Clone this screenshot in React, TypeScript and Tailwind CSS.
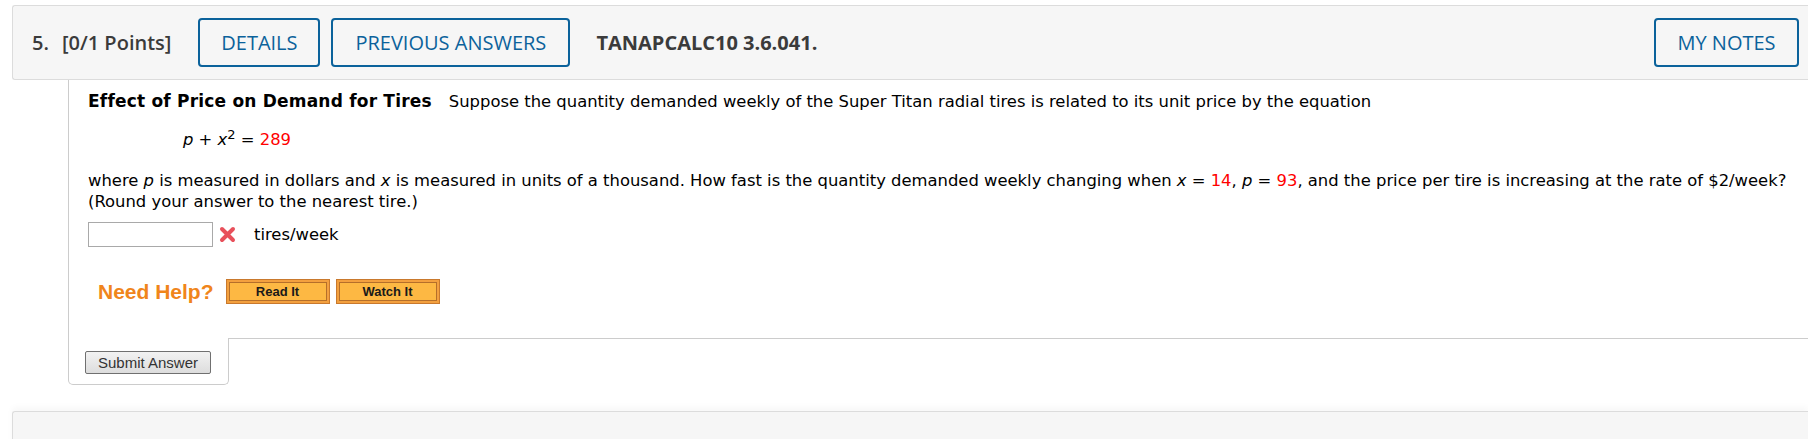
export default function App() {
  const red = "text-[#ff0000]";

  return (
    <div className="relative h-[439px] w-full overflow-hidden bg-white font-['DejaVu_Sans',sans-serif] text-black">
      {/* question header */}
      <div className="ml-[12px] mt-[5px] flex h-[75px] items-center rounded-l-[3px] border border-r-0 border-[#dcdcdc] bg-[#f6f6f6] pl-[19px] pr-[9px] font-['Open_Sans',sans-serif]">
        <span className="text-[20px] font-semibold text-[#3b3b3b]">5.</span>
        <span className="ml-[13px] text-[20px] font-semibold text-[#3b3b3b]">[0/1 Points]</span>
        <button className="ml-[27px] h-[49px] w-[122px] rounded-[4px] border-2 border-[#0b629b] text-[20px] text-[#0b629b]">
          DETAILS
        </button>
        <button className="ml-[11px] h-[49px] w-[239px] rounded-[4px] border-2 border-[#0b629b] text-[20px] text-[#0b629b]">
          PREVIOUS ANSWERS
        </button>
        <span className="ml-[26px] text-[20px] font-bold text-[#3b3b3b]">TANAPCALC10 3.6.041.</span>
        <div className="flex-1" />
        <button className="h-[49px] w-[145px] rounded-[4px] border-2 border-[#0b629b] text-[20px] text-[#0b629b]">
          MY NOTES
        </button>
      </div>

      {/* question body */}
      <div className="ml-[68px] flex flex-col">
        <div className="border-l border-[#cccccc] pb-[34px] pl-[19px] pt-[11px] text-[16.4px] leading-[21px]">
          <p>
            <span className="text-[17px] font-bold tracking-[0.2px]">Effect of Price on Demand for Tires</span>
            <span className="ml-[17px]">
              Suppose the quantity demanded weekly of the Super Titan radial tires is related to its unit price by the equation
            </span>
          </p>
          <p className="mt-[17px] pl-[95px]">
            <i>p</i> + <i>x</i>
            <sup className="text-[13px]">2</sup> = <span className={red}>289</span>
          </p>
          <p className="mt-[20px]">
            where <i>p</i> is measured in dollars and <i>x</i> is measured in units of a thousand. How fast is the
            quantity demanded weekly changing when <i>x</i> = <span className={red}>14</span>, <i>p</i> ={" "}
            <span className={red}>93</span>, and the price per tire is increasing at the rate of $2/week?
            <br />
            (Round your answer to the nearest tire.)
          </p>
          <div className="mt-[10px] flex items-center">
            <input className="h-[25px] w-[125px] border border-[#a9a9a9] bg-white" />
            <svg className="ml-[6px]" width="17" height="17" viewBox="0 0 17 17">
              <path d="M3 3 L14 14 M14 3 L3 14" stroke="#e8505b" strokeWidth="4" strokeLinecap="round" />
            </svg>
            <span className="ml-[18px]">tires/week</span>
          </div>
          <div className="mt-[32px] flex items-center pl-[10px] font-['Liberation_Sans',Arial,sans-serif]">
            <span className="text-[21px] font-bold text-[#f0851b]">Need Help?</span>
            <HelpButton label="Read It" className="ml-[12px]" />
            <HelpButton label="Watch It" className="ml-[6px]" />
          </div>
        </div>
        <div className="flex">
          <div className="h-[47px] w-[161px] rounded-b-[5px] border border-t-0 border-[#cccccc] pl-[16px] pt-[13px]">
            <button className="h-[23px] w-[126px] rounded-[2px] border border-[#707070] bg-gradient-to-b from-[#f2f2f2] to-[#dddddd] font-['Liberation_Sans',Arial,sans-serif] text-[15px] leading-[21px] text-[#333333]">
              Submit Answer
            </button>
          </div>
          <div className="flex-1 border-t border-[#cccccc]" />
        </div>
      </div>

      {/* next question header */}
      <div className="ml-[12px] mt-[26px] h-[40px] rounded-tl-[3px] border-l border-t border-[#dcdcdc] bg-[#f6f6f6] shadow-[0_-4px_6px_rgba(0,0,0,0.03)]" />
    </div>
  );
}

function HelpButton({ label, className }: { label: string; className?: string }) {
  return (
    <div className={`h-[25px] w-[104px] border border-[#c9792d] bg-[#f3a03f] p-[2px] ${className ?? ""}`}>
      <div className="flex h-full items-center justify-center border border-[#b56f2a] bg-[#fdb843] text-[13px] font-bold text-[#1a1a1a]">
        {label}
      </div>
    </div>
  );
}
